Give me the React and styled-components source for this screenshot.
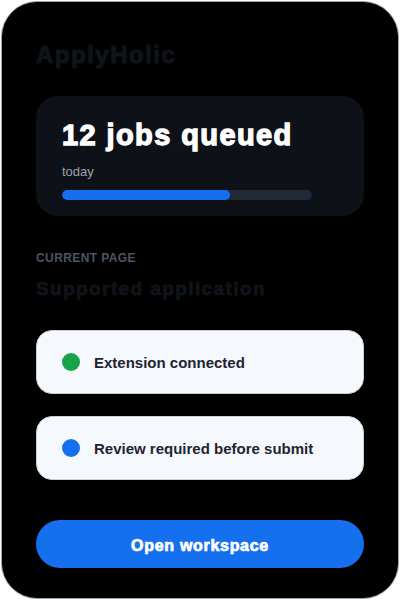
import React from 'react';
import styled, { createGlobalStyle } from 'styled-components';

const GlobalStyle = createGlobalStyle`
  html, body {
    margin: 0;
    padding: 0;
    background: #fff;
  }
  body {
    font-family: 'Liberation Sans', Arial, sans-serif;
  }
`;

// heavy display face: bold + a bit of stroke and tracking to get the black weight
const heavy = (stroke, spacing) => `
  font-weight: 700;
  -webkit-text-stroke: ${stroke}px currentColor;
  letter-spacing: ${spacing}px;
`;

const Shell = styled.div`
  box-sizing: border-box;
  width: 398px;
  height: 598px;
  margin: 1px;
  background: #000;
  border: 1px solid #9ca3af;
  border-radius: 36px;
  padding: 36px 34px 0 34px;
  display: flex;
  flex-direction: column;
`;

const Brand = styled.h1`
  margin: 0;
  font-size: 24px;
  ${heavy(1.2, 1.5)}
  color: #10131a;
  line-height: 34px;
`;

const StatsCard = styled.section`
  margin-top: 24px;
  background: #0e1117;
  border-radius: 22px;
  padding: 21px 26px 16px;
  display: flex;
  flex-direction: column;
`;

const Count = styled.div`
  font-size: 29px;
  ${heavy(1.3, 1.4)}
  color: #fff;
  line-height: 36px;
`;

const Sub = styled.div`
  margin-top: 11px;
  font-size: 13px;
  color: #9ca3af;
  line-height: 16px;
`;

const Track = styled.div`
  margin-top: 10px;
  width: 250px;
  height: 10px;
  border-radius: 5px;
  background: #1f2937;
  overflow: hidden;
`;

const Fill = styled.div`
  height: 100%;
  border-radius: 5px;
  background: #1570ef;
`;

const Label = styled.div`
  margin-top: 34px;
  font-size: 12px;
  font-weight: 700;
  color: #4b5563;
  letter-spacing: 0.4px;
  line-height: 16px;
`;

const PageName = styled.div`
  margin-top: 12px;
  font-size: 19px;
  ${heavy(0.9, 1.4)}
  color: #10131a;
  line-height: 22px;
`;

const StatusList = styled.div`
  margin-top: 30px;
  display: flex;
  flex-direction: column;
  gap: 22px;
`;

const Status = styled.div`
  box-sizing: border-box;
  height: 64px;
  background: #f5f8fd;
  border: 1px solid #cbd0d8;
  border-radius: 16px;
  padding: 0 25px;
  display: flex;
  align-items: center;
  gap: 14px;
`;

const Dot = styled.span`
  width: 18px;
  height: 18px;
  border-radius: 50%;
  background: ${p => p.color};
  flex: none;
`;

const StatusText = styled.span`
  font-size: 15px;
  font-weight: 700;
  color: #1f2430;
`;

const Button = styled.button`
  margin-top: 40px;
  height: 48px;
  padding: 3px 0 0;
  border: none;
  border-radius: 24px;
  background: #1570ef;
  color: #fff;
  font-family: inherit;
  font-size: 16px;
  ${heavy(0.7, 0.7)}
  cursor: pointer;
`;

const statuses = [
  { text: 'Extension connected', color: '#16a34a' },
  { text: 'Review required before submit', color: '#1570ef' },
];

export default function App() {
  return (
    <>
      <GlobalStyle />
      <Shell>
        <Brand>ApplyHolic</Brand>
        <StatsCard>
          <Count>12 jobs queued</Count>
          <Sub>today</Sub>
          <Track>
            <Fill style={{ width: '67%' }} />
          </Track>
        </StatsCard>
        <Label>CURRENT PAGE</Label>
        <PageName>Supported application</PageName>
        <StatusList>
          {statuses.map(s => (
            <Status key={s.text}>
              <Dot color={s.color} />
              <StatusText>{s.text}</StatusText>
            </Status>
          ))}
        </StatusList>
        <Button>Open workspace</Button>
      </Shell>
    </>
  );
}
